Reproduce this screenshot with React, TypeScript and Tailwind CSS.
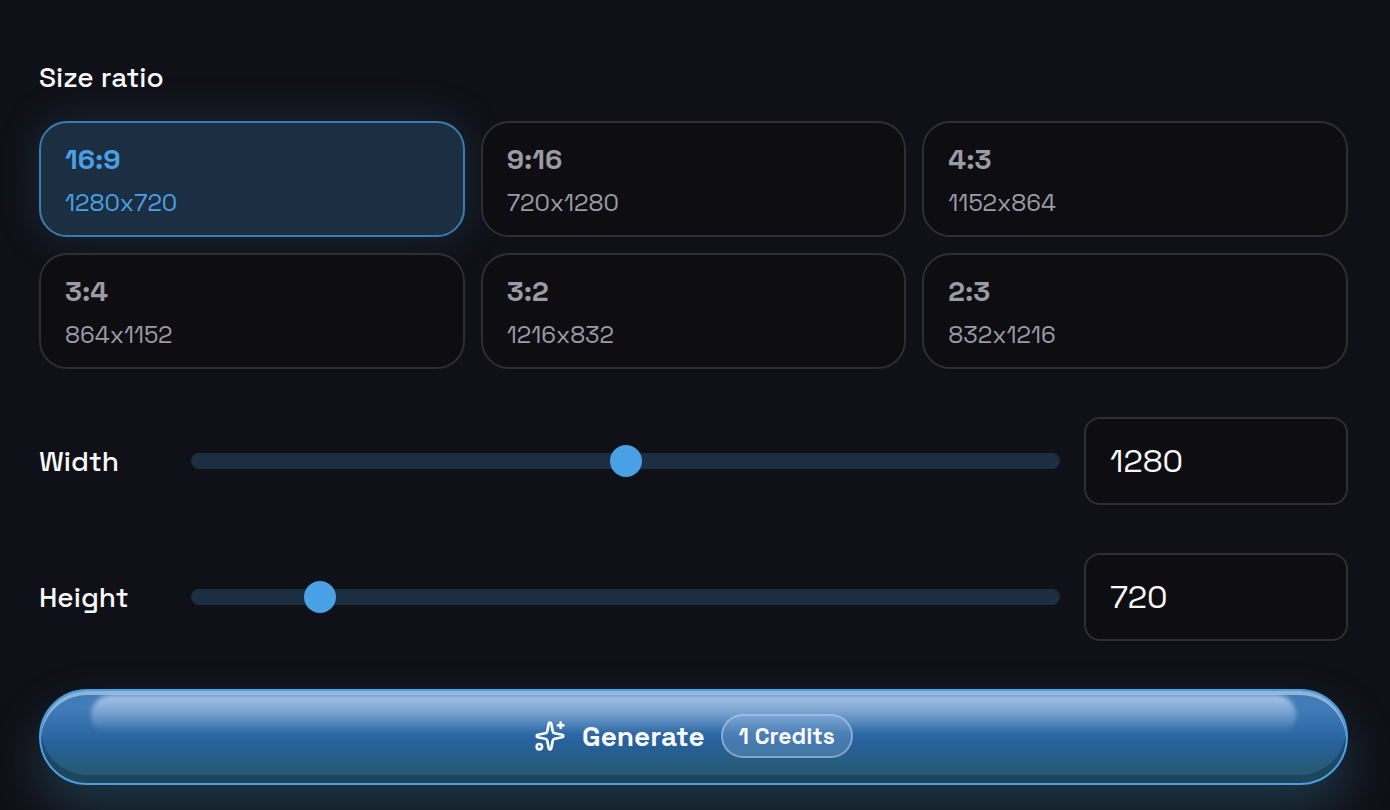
import { useState } from 'react';
import { Sparkles } from 'lucide-react';
import clsx from 'clsx';

const ratios = [
  { label: '16:9', width: 1280, height: 720 },
  { label: '9:16', width: 720, height: 1280 },
  { label: '4:3', width: 1152, height: 864 },
  { label: '3:4', width: 864, height: 1152 },
  { label: '3:2', width: 1216, height: 832 },
  { label: '2:3', width: 832, height: 1216 }
];

const MIN_SIZE = 512;
const MAX_SIZE = 2048;

type Size = { width: number; height: number };

function RatioPicker({ size, onSelect }: { size: Size; onSelect: (size: Size) => void }) {
  return (
    <section aria-labelledby="ratio-heading">
      <h2 id="ratio-heading" className="text-[28px] leading-10 font-medium">
        Size ratio
      </h2>
      <div className="mt-6 grid grid-cols-3 gap-4">
        {ratios.map(({ label, width, height }) => {
          const active = size.width === width && size.height === height;
          return (
            <button
              key={label}
              type="button"
              aria-pressed={active}
              onClick={() => onSelect({ width, height })}
              className={clsx(
                'rounded-[28px] border-2 px-6 py-4 text-left',
                active
                  ? 'border-[#3a7bb0] bg-[#1c2e42] text-[#49a0e4] shadow-[0_0_40px_rgba(54,122,150,0.26)]'
                  : 'border-[#2e2e33] bg-[#0d0d12] text-[#9b9ba6]'
              )}
            >
              <span className="block text-[28px] leading-10 font-semibold">{label}</span>
              <span className="mt-2 block text-2xl">
                {width}x{height}
              </span>
            </button>
          );
        })}
      </div>
    </section>
  );
}

function DimensionRow({
  id,
  label,
  value,
  onChange
}: {
  id: string;
  label: string;
  value: number;
  onChange: (value: number) => void;
}) {
  return (
    <div className="flex items-center gap-6">
      <label htmlFor={id} className="w-32 shrink-0 text-[28px] leading-10 font-medium">
        {label}
      </label>
      <input
        type="range"
        aria-label={`${label} slider`}
        min={MIN_SIZE}
        max={MAX_SIZE}
        value={value}
        onChange={(event) => onChange(Number(event.target.value))}
        className="h-4 min-w-0 flex-1 cursor-pointer appearance-none rounded-full bg-[#1c2e42] [&::-webkit-slider-thumb]:size-8 [&::-webkit-slider-thumb]:appearance-none [&::-webkit-slider-thumb]:rounded-full [&::-webkit-slider-thumb]:bg-[#49a0e4]"
      />
      <input
        id={id}
        type="text"
        inputMode="numeric"
        value={value}
        onChange={(event) => onChange(Number(event.target.value) || 0)}
        className="h-[88px] w-66 rounded-2xl border-2 border-[#2e2e33] bg-[#0d0d12] px-6 text-[32px] outline-none"
      />
    </div>
  );
}

function GenerateButton({ credits }: { credits: number }) {
  return (
    <button
      type="button"
      className="relative flex h-24 w-full items-center justify-center gap-4 rounded-full border-2 border-[#49a0e4] bg-linear-to-b from-[#417cb8] from-20% via-[#27629e] via-55% to-[#265a76] to-85% pb-0.5 shadow-[0_24px_48px_rgba(54,122,150,0.36),inset_0_4px_0_rgba(255,255,255,0.42),inset_0_-8px_0_rgba(0,0,0,0.22)]"
    >
      {/* glossy highlight along the top edge */}
      <span
        aria-hidden="true"
        className="absolute inset-x-[50px] top-1 h-10 rounded-[20px] bg-linear-to-b from-[#b4cdec]/90 to-[#7fa8dc]/0 to-95% blur-[2px]"
      />
      <Sparkles className="relative size-8" aria-hidden="true" />
      <span className="relative text-[28px] leading-10 font-semibold">Generate</span>
      <span className="relative rounded-full border-2 border-[#c3d8f2]/50 bg-[#a3c3ea]/25 px-4 py-1 text-[23px] leading-8 font-semibold">
        {credits} Credits
      </span>
    </button>
  );
}

export default function App() {
  const [size, setSize] = useState<Size>({ width: 1280, height: 720 });

  return (
    <main className="flex min-h-screen flex-col gap-12 overflow-hidden bg-[#101018] pt-[57px] pr-[42px] pb-6 pl-[39px] font-['Space_Grotesk','Inter',sans-serif] text-[#fafafa]">
      <RatioPicker size={size} onSelect={setSize} />
      <DimensionRow
        id="width"
        label="Width"
        value={size.width}
        onChange={(width) => setSize({ ...size, width })}
      />
      <DimensionRow
        id="height"
        label="Height"
        value={size.height}
        onChange={(height) => setSize({ ...size, height })}
      />
      <GenerateButton credits={1} />
    </main>
  );
}
